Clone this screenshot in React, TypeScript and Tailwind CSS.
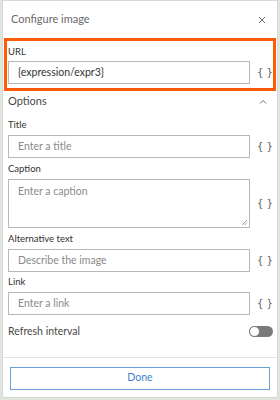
import React from "react";

const font = { fontFamily: "Lato, 'Noto Sans', sans-serif" };

function Braces({ className = "" }: { className?: string }) {
  return (
    <span
      className={"w-[20px] shrink-0 whitespace-nowrap text-center text-[10px] leading-[12px] text-[#5e5e5e] " + className}
      style={{ fontFamily: "'DejaVu Sans', sans-serif" }}
    >
      {"{ }"}
    </span>
  );
}

function Field({ label, placeholder }: { label: string; placeholder: string }) {
  return (
    <div className="flex shrink-0 flex-col">
      <div className="h-[14px] pl-[5px] text-[9.5px] leading-[14px] text-[#323232]">{label}</div>
      <div className="mt-[3px] flex items-center pl-[5px]">
        <div className="flex h-[23px] w-[242px] shrink-0 items-center border border-[#b8b8b8] pl-[9px] text-[10.5px] text-[#8a8a8a]">
          {placeholder}
        </div>
        <Braces className="ml-[5px]" />
      </div>
    </div>
  );
}

export default function App() {
  return (
    <div className="flex h-[400px] w-[280px] bg-[#dfe6dc]" style={font}>
      <div className="ml-[2px] flex h-[398px] w-[276px] flex-col border border-[#d8d8d8] bg-white">
        {/* Header */}
        <div className="flex h-[37px] shrink-0 items-center justify-between pl-[8px] pr-[11px]">
          <span className="text-[11px] text-[#6a6a6a]">Configure image</span>
          <svg width="8" height="8" viewBox="0 0 8 8" className="mt-[1px]">
            <path d="M1 1L7 7M7 1L1 7" stroke="#6a6a6a" strokeWidth="1" />
          </svg>
        </div>
        {/* URL box */}
        <div className="mx-[1px] flex h-[53px] shrink-0 flex-col border-[3px] border-[#ff5a0a] pt-[4px]">
          <div className="h-[13px] pl-[1px] text-[9.5px] leading-[13px] text-[#323232]">URL</div>
          <div className="mt-[3px] flex items-center pl-[1px]">
            <div className="flex h-[23px] w-[242px] shrink-0 items-center border border-[#b8b8b8] pl-[9px] text-[10.5px] text-[#323232]">
              {"{expression/expr3}"}
            </div>
            <Braces className="ml-[5px]" />
          </div>
        </div>
        {/* Options */}
        <div className="flex h-[20px] shrink-0 items-center justify-between pl-[5px] pr-[10px]">
          <span className="text-[11px] text-[#4a4a4a]">Options</span>
          <svg width="8" height="5" viewBox="0 0 8 5">
            <path d="M1 4.5L4 1.5L7 4.5" stroke="#6a6a6a" strokeWidth="1" fill="none" />
          </svg>
        </div>
        <div className="mt-[7px] shrink-0">
          <Field label="Title" placeholder="Enter a title" />
        </div>
        <div className="mt-[4px] flex shrink-0 flex-col">
          <div className="h-[14px] pl-[5px] text-[9.5px] leading-[14px] text-[#323232]">Caption</div>
          <div className="mt-[3px] flex items-center pl-[5px]">
            <div className="relative flex h-[49px] w-[242px] shrink-0 items-start border border-[#b8b8b8] pl-[9px] pt-[4px] text-[10.5px] text-[#8a8a8a]">
              Enter a caption
              <svg width="7" height="7" viewBox="0 0 7 7" className="absolute bottom-[1px] right-[1px]">
                <path d="M6 1L1 6M6 3.5L3.5 6" stroke="#9a9a9a" strokeWidth="0.9" />
              </svg>
            </div>
            <Braces className="ml-[5px]" />
          </div>
        </div>
        <div className="mt-[4px] shrink-0">
          <Field label="Alternative text" placeholder="Describe the image" />
        </div>
        <div className="mt-[3px] shrink-0">
          <Field label="Link" placeholder="Enter a link" />
        </div>
        {/* Refresh */}
        <div className="mt-[9px] flex shrink-0 items-center justify-between pl-[5px] pr-[4px]">
          <span className="text-[10.5px] text-[#4a4a4a]">Refresh interval</span>
          <div className="flex h-[11px] w-[24px] items-center rounded-full bg-[#7a7a7a]">
            <div className="h-[11px] w-[11px] rounded-full border border-[#7a7a7a] bg-white" />
          </div>
        </div>
        <div className="mt-[17px] h-px shrink-0 bg-[#e4e4e4]" />
        <div className="flex flex-1 items-start justify-center pt-[9px]">
          <div className="flex h-[23px] w-[260px] items-center justify-center border border-[#6b9fdc] text-[10.5px] text-[#3f7fcf]">
            Done
          </div>
        </div>
      </div>
    </div>
  );
}
